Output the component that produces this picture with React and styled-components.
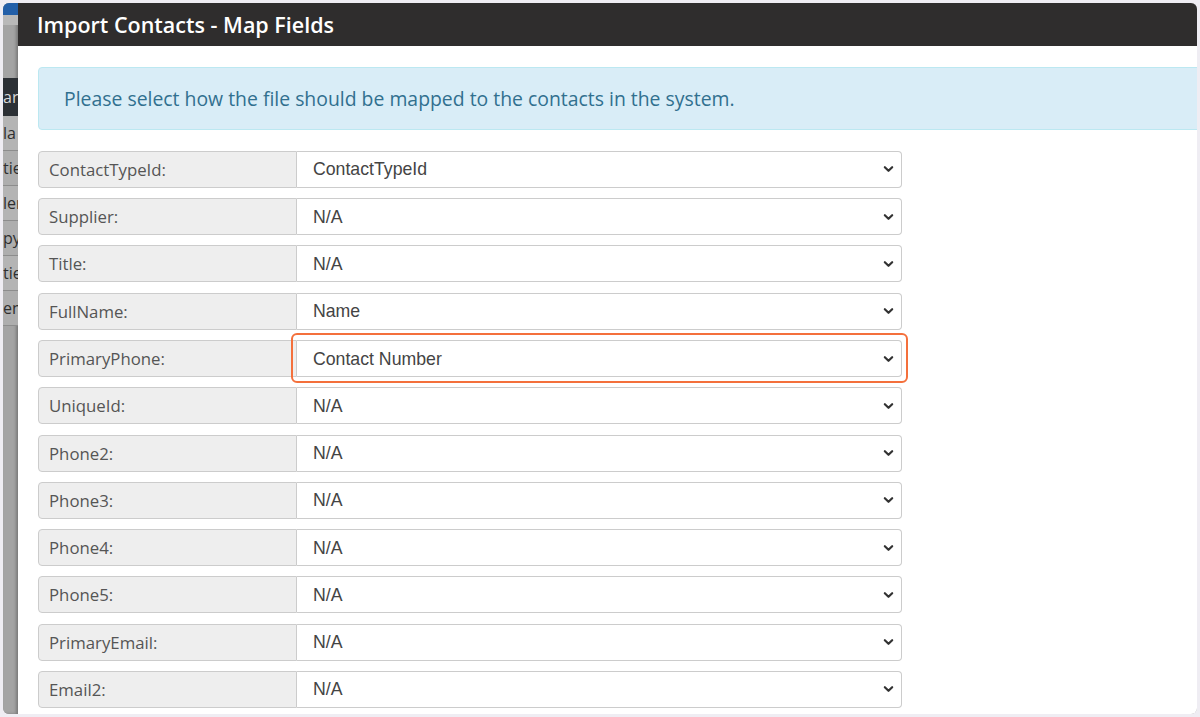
import React from 'react';
import styled, { createGlobalStyle } from 'styled-components';

const GlobalStyle = createGlobalStyle`
  html, body {
    margin: 0;
    padding: 0;
    background: #efedf3;
  }
  body {
    font-family: "Open Sans", "Liberation Sans", sans-serif;
  }
`;

const Frame = styled.div`
  width: 1200px;
  height: 717px;
  padding: 3px;
  box-sizing: border-box;
  background: #efedf3;
`;

const Screen = styled.div`
  display: flex;
  height: 100%;
  border-radius: 6px;
  overflow: hidden;
  background: #a6a6a6;
`;

const BackStrip = styled.div`
  width: 15px;
  flex-shrink: 0;
  display: flex;
  flex-direction: column;
  overflow: hidden;
  background: #a4a4a4;
  box-shadow: inset -2px 0 3px rgba(0, 0, 0, 0.25);
`;

const BackTop = styled.div`
  height: 12px;
  background: #235fa8;
`;

const BackSub = styled.div`
  height: 10px;
  background: #b9b9b9;
`;

const BackGap = styled.div`
  height: 53px;
`;

const BackBar = styled.div`
  height: 38px;
  background: #2c3035;
  color: #d8d8d8;
  font-size: 16px;
  line-height: 38px;
  white-space: nowrap;
`;

const BackRow = styled.div`
  height: 34px;
  line-height: 34px;
  border-bottom: 1px solid #8d8d8d;
  color: #2f2f2f;
  font-size: 16px;
  white-space: nowrap;
  background: ${({ $tint }) => $tint || '#b2b2b2'};
`;

const Modal = styled.div`
  flex: 1;
  display: flex;
  flex-direction: column;
  background: #fff;
  min-width: 0;
`;

const Header = styled.div`
  height: 43px;
  flex-shrink: 0;
  background: #2f2d2d;
  color: #fff;
  display: flex;
  align-items: center;
  padding-left: 19px;
  font-size: 21.5px;
  font-weight: 600;
`;

const Body = styled.div`
  padding: 21px 0 0 20px;
  display: flex;
  flex-direction: column;
  gap: 10.27px;
`;

const Alert = styled.div`
  height: 63px;
  box-sizing: border-box;
  margin-right: -20px;
  margin-bottom: 10.7px;
  border: 1px solid #bce8f1;
  border-radius: 4px;
  background: #d9edf7;
  color: #31708f;
  font-size: 19.4px;
  display: flex;
  align-items: center;
  padding-left: 25px;
`;

const Row = styled.div`
  display: flex;
  width: 864px;
  height: 37px;
`;

const Label = styled.div`
  width: 259px;
  flex-shrink: 0;
  box-sizing: border-box;
  background: #eeeeee;
  border: 1px solid #cccccc;
  border-radius: 4px 0 0 4px;
  color: #555;
  font-size: 16.8px;
  display: flex;
  align-items: center;
  padding-left: 10px;
`;

const SelectWrap = styled.div`
  position: relative;
  flex: 1;
`;

const Select = styled.select`
  appearance: none;
  width: 100%;
  height: 100%;
  box-sizing: border-box;
  border: 1px solid #cccccc;
  border-left: none;
  border-radius: 0 4px 4px 0;
  background: #fff;
  color: #444;
  font-family: "Liberation Sans", Arial, sans-serif;
  font-size: 17.7px;
  padding: 0 30px 0 16px;
  outline: none;
`;

const Chevron = styled.svg`
  position: absolute;
  right: 8px;
  top: 50%;
  transform: translateY(-50%);
  width: 11px;
  height: 11px;
  pointer-events: none;
`;

const Highlight = styled.div`
  position: absolute;
  left: -6px;
  right: -6px;
  top: -7px;
  bottom: -6px;
  border: 2px solid #f4703c;
  border-radius: 6px;
  pointer-events: none;
`;

const fields = [
  ['ContactTypeId:', 'ContactTypeId'],
  ['Supplier:', 'N/A'],
  ['Title:', 'N/A'],
  ['FullName:', 'Name'],
  ['PrimaryPhone:', 'Contact Number', true],
  ['UniqueId:', 'N/A'],
  ['Phone2:', 'N/A'],
  ['Phone3:', 'N/A'],
  ['Phone4:', 'N/A'],
  ['Phone5:', 'N/A'],
  ['PrimaryEmail:', 'N/A'],
  ['Email2:', 'N/A'],
];

const backRows = [
  ['la', '#b4b4b4'],
  ['tie', '#aeaeae'],
  ['ler', '#b4b4b4'],
  ['py', '#aeaeae'],
  ['tie', '#b4b4b4'],
  ['en', '#aeaeae'],
];

const options = ['N/A', 'ContactTypeId', 'Name', 'Contact Number', 'Email'];

export default function App() {
  return (
    <>
      <GlobalStyle />
      <Frame>
        <Screen>
          <BackStrip>
            <BackTop />
            <BackSub />
            <BackGap />
            <BackBar>ar</BackBar>
            {backRows.map(([t, c], i) => (
              <BackRow key={i} $tint={c}>{t}</BackRow>
            ))}
          </BackStrip>
          <Modal>
            <Header>Import Contacts - Map Fields</Header>
            <Body>
              <Alert>Please select how the file should be mapped to the contacts in the system.</Alert>
              {fields.map(([label, value, marked]) => (
                <Row key={label}>
                  <Label>{label}</Label>
                  <SelectWrap>
                    <Select defaultValue={value}>
                      {options.map((o) => (
                        <option key={o}>{o}</option>
                      ))}
                    </Select>
                    <Chevron viewBox="0 0 12 12">
                      <path d="M2 4 L6 8 L10 4" fill="none" stroke="#333" strokeWidth="2.4" strokeLinecap="round" strokeLinejoin="round" />
                    </Chevron>
                    {marked && <Highlight />}
                  </SelectWrap>
                </Row>
              ))}
            </Body>
          </Modal>
        </Screen>
      </Frame>
    </>
  );
}
